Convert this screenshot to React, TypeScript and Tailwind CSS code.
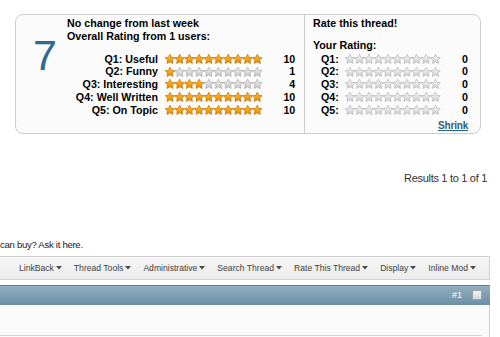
import React from "react";

const STAR =
  "5,0.2 6.47,3.28 9.85,3.72 7.38,6.07 8,9.43 5,7.8 2,9.43 2.62,6.07 0.15,3.72 3.53,3.28";

function Stars({
  filled,
  id,
  step,
  light,
}: {
  filled: number;
  id: string;
  step: number;
  light?: boolean;
}) {
  const w = step * 9 + 10;
  return (
    <svg width={w} height={10} viewBox={`0 0 ${w} 10`} className="block shrink-0">
      <defs>
        <linearGradient id={`o${id}`} x1="0" y1="0" x2="0" y2="1">
          <stop offset="0" stopColor="#ffc22e" />
          <stop offset="1" stopColor="#e88600" />
        </linearGradient>
        <linearGradient id={`g${id}`} x1="0" y1="0" x2="0" y2="1">
          <stop offset="0" stopColor={light ? "#f8f8f8" : "#f2f2f2"} />
          <stop offset="1" stopColor={light ? "#d0d0d0" : "#c6c6c6"} />
        </linearGradient>
      </defs>
      {Array.from({ length: 10 }).map((_, i) => (
        <polygon
          key={i}
          points={STAR}
          transform={`translate(${i * step} 0)`}
          fill={i < filled ? `url(#o${id})` : `url(#g${id})`}
          stroke={i < filled ? "#c46f00" : light ? "#b6b6b6" : "#a8a8a8"}
          strokeWidth="0.7"
          strokeLinejoin="round"
        />
      ))}
    </svg>
  );
}

const overall = [
  { q: "Q1: Useful", v: 10 },
  { q: "Q2: Funny", v: 1 },
  { q: "Q3: Interesting", v: 4 },
  { q: "Q4: Well Written", v: 10 },
  { q: "Q5: On Topic", v: 10 },
];

const tools = [
  "LinkBack",
  "Thread Tools",
  "Administrative",
  "Search Thread",
  "Rate This Thread",
  "Display",
  "Inline Mod",
];

export default function App() {
  return (
    <div
      className="w-[500px] h-[337px] overflow-hidden bg-white text-black"
      style={{ fontFamily: '"Liberation Sans", Arial, sans-serif' }}
    >
      {/* Rating box */}
      <div className="pt-[14px] pl-[15px]">
        <div className="w-[466px] h-[120px] border border-[#cdcdcd] rounded-[8px] bg-[#fbfbfb] flex">
          {/* left part */}
          <div className="w-[288px] flex">
            <div className="w-[51px] pl-[17px] pt-[18.7px]">
              <div className="text-[43px] leading-[43px] text-[#2f6a92]">7</div>
            </div>
            <div className="flex-1 pt-[1.5px] font-bold text-[10.7px]">
              <div className="leading-[13px] whitespace-nowrap">No change from last week</div>
              <div className="leading-[13px] whitespace-nowrap">Overall Rating from 1 users:</div>
              <div className="mt-[10px]">
                {overall.map((r, i) => (
                  <div key={i} className="flex items-center h-[12.75px] leading-[12.75px]">
                    <div className="w-[91px] text-right whitespace-nowrap">{r.q}</div>
                    <div className="ml-[7px]">
                      <Stars filled={r.v} id={`l${i}`} step={9.7} />
                    </div>
                    <div className="w-[33px] text-right">{r.v}</div>
                  </div>
                ))}
              </div>
            </div>
          </div>
          {/* right part */}
          <div className="flex-1 border-l border-[#cdcdcd] pl-[8px] pr-[12px] pt-[1.5px] font-bold text-[10.7px]">
            <div className="leading-[13px] whitespace-nowrap">Rate this thread!</div>
            <div className="leading-[13px] mt-[9.6px] whitespace-nowrap">Your Rating:</div>
            <div className="mt-[0.5px] pl-[8px]">
              {[0, 1, 2, 3, 4].map((i) => (
                <div key={i} className="flex items-center h-[12.75px] leading-[12.75px]">
                  <div className="w-[24px] whitespace-nowrap">Q{i + 1}:</div>
                  <Stars filled={0} id={`r${i}`} step={9.5} light />
                  <div className="flex-1 text-right">0</div>
                </div>
              ))}
            </div>
            <div className="mt-[3px] flex justify-end">
              <span className="text-[10px] leading-[13px] text-[#2b5e84] underline tracking-[-0.2px]">
                Shrink
              </span>
            </div>
          </div>
        </div>
      </div>

      {/* Results */}
      <div className="mt-[37.7px] flex justify-end pr-[13px]">
        <span className="text-[11px] leading-[13px] text-[#333333] tracking-[-0.3px]">
          Results 1 to 1 of 1
        </span>
      </div>

      {/* can buy */}
      <div className="mt-[53.6px] flex">
        <span className="text-[9.6px] leading-[13px] text-[#222222] whitespace-nowrap tracking-[-0.3px]">
          can buy? Ask it here.
        </span>
      </div>

      {/* Toolbar */}
      <div className="mt-[4.7px] w-[490px] h-[24px] border-t border-b border-r border-[#d2d2d2] bg-gradient-to-b from-[#f6f6f6] to-[#ececec] flex items-center justify-end pr-[13px] gap-[12px]">
        {tools.map((t) => (
          <div key={t} className="flex items-center gap-[2px] text-[8.6px] leading-[12px] text-[#3f3f3f] whitespace-nowrap">
            <span>{t}</span>
            <svg width="6" height="4" viewBox="0 0 6 4" className="block">
              <polygon points="0,0 6,0 3,3.5" fill="#4a4a4a" />
            </svg>
          </div>
        ))}
      </div>

      {/* Blue header */}
      <div className="mt-[5px] w-[490px] h-[20px] border-t border-[#5a7f98] bg-gradient-to-b from-[#93afc1] to-[#6c8fa6] flex items-center justify-end pr-[8px]">
        <span className="text-[9px] leading-[12px] text-white mr-[10px]">#1</span>
        <div className="w-[10px] h-[10px] border border-[#9aa4aa] bg-gradient-to-b from-[#f4f4f4] to-[#d6d6d6]" />
      </div>

      {/* Post body */}
      <div className="w-[490px] h-[40px] border-r border-[#d2d2d2] bg-[#fafafa]">
        <div className="w-[482px] h-[31px] border-b border-[#d6d6d6]" />
      </div>
    </div>
  );
}
